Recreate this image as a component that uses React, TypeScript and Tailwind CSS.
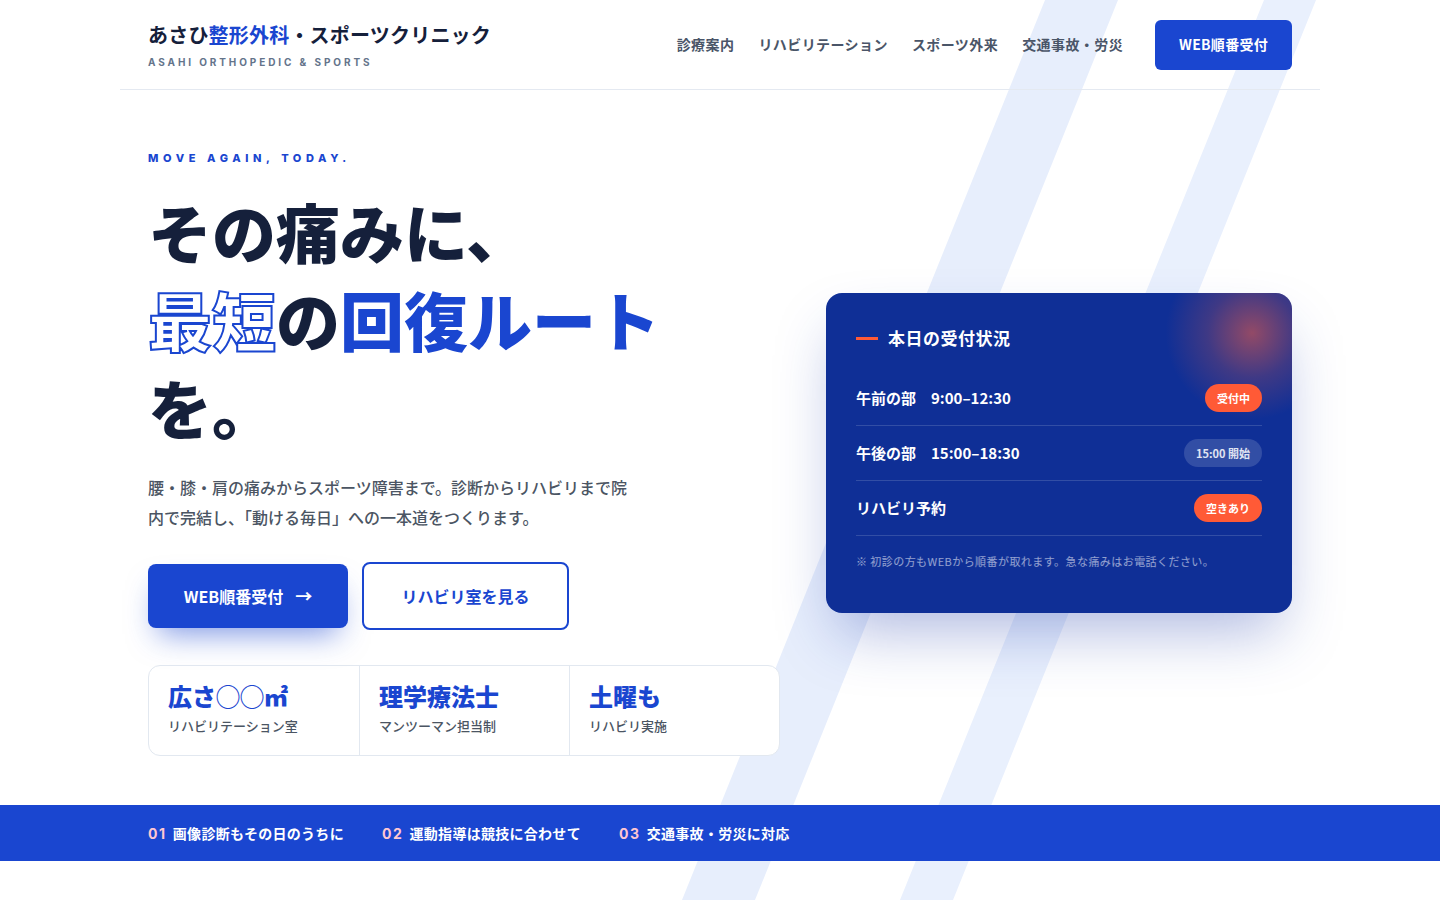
import React from "react";

type Slot = {
  label: string;
  badge: string;
  tone: "hot" | "muted";
};

const navItems = ["診療案内", "リハビリテーション", "スポーツ外来", "交通事故・労災"];

const slots: Slot[] = [
  { label: "午前の部　9:00–12:30", badge: "受付中", tone: "hot" },
  { label: "午後の部　15:00–18:30", badge: "15:00 開始", tone: "muted" },
  { label: "リハビリ予約", badge: "空きあり", tone: "hot" },
];

const stats = [
  { title: "広さ◯◯㎡", sub: "リハビリテーション室" },
  { title: "理学療法士", sub: "マンツーマン担当制" },
  { title: "土曜も", sub: "リハビリ実施" },
];

const points = [
  { no: "01", text: "画像診断もその日のうちに" },
  { no: "02", text: "運動指導は競技に合わせて" },
  { no: "03", text: "交通事故・労災に対応" },
];

const Stripes = (): JSX.Element => (
  <svg
    className="pointer-events-none absolute inset-0 h-full w-full"
    viewBox="0 0 1440 900"
    preserveAspectRatio="none"
    aria-hidden="true"
  >
    <polygon points="1045,0 1118,0 755,900 682,900" fill="#e7eefc" />
    <polygon points="1264,0 1316,0 953,900 900,900" fill="#e9f0fd" />
  </svg>
);

const Header = (): JSX.Element => (
  <header className="mx-auto max-w-[1200px]">
    <div className="flex h-[90px] items-center justify-between border-b border-[#e4e9f1] px-7">
      <div className="pt-[2px]">
        <p className="text-[20px] font-bold leading-6 tracking-[0.01em] text-[#15203b]">
          あさひ<span className="text-[#1a46d0]">整形外科</span>・スポーツクリニック
        </p>
        <p className="mt-[9px] font-['Inter','Noto_Sans_CJK_JP',sans-serif] text-[10px] font-bold leading-3 tracking-[0.29em] text-[#64748b]">
          ASAHI ORTHOPEDIC &amp; SPORTS
        </p>
      </div>
      <nav className="flex items-center gap-6">
        {navItems.map((item) => (
          <a key={item} className="text-[14px] font-bold tracking-[0.03em] text-[#4a5568]">
            {item}
          </a>
        ))}
        <a className="ml-2 flex h-[50px] items-center rounded-md bg-[#1a46d0] px-6 text-[14px] font-bold tracking-[0.02em] text-white">
          WEB順番受付
        </a>
      </nav>
    </div>
  </header>
);

const StatusCard = (): JSX.Element => (
  <div className="relative overflow-hidden rounded-2xl bg-[#0f2f96] px-[30px] pb-11 pt-8 shadow-[0_30px_60px_-12px_rgba(28,58,170,0.35)]">
    <div className="absolute -right-[50px] -top-[50px] h-[180px] w-[180px] rounded-full bg-[radial-gradient(circle,rgba(255,96,64,0.55)_0%,rgba(255,96,64,0.2)_35%,transparent_68%)]" />
    <div className="relative flex items-center gap-[10px]">
      <span className="h-[3px] w-[22px] bg-[#ff5a36]" />
      <h3 className="text-[17px] font-bold leading-[26px] tracking-[0.03em] text-white">本日の受付状況</h3>
    </div>
    <ul className="relative mt-5">
      {slots.map((slot) => (
        <li
          key={slot.label}
          className="flex h-[55px] items-center justify-between border-b border-white/15"
        >
          <span className="text-[15px] font-bold text-white">{slot.label}</span>
          <span
            className={
              slot.tone === "hot"
                ? "flex h-7 items-center rounded-full bg-[#ff5a36] px-3 text-[11px] font-bold text-white"
                : "flex h-7 items-center rounded-full bg-white/15 px-3 text-[11px] font-bold text-white/85"
            }
          >
            {slot.badge}
          </span>
        </li>
      ))}
    </ul>
    <p className="relative mt-[17px] text-[11px] leading-4 tracking-[0.04em] text-white/55">
      ※ 初診の方もWEBから順番が取れます。急な痛みはお電話ください。
    </p>
  </div>
);

const Hero = (): JSX.Element => (
  <section className="mx-auto max-w-[1200px] px-7 pb-[49px] pt-[60px]">
    <div className="grid grid-cols-[632px_466px] items-center justify-between">
      <div>
        <p className="font-['Inter','Noto_Sans_CJK_JP',sans-serif] text-[11px] font-extrabold leading-4 tracking-[0.42em] text-[#1a46d0]">
          MOVE AGAIN, TODAY.
        </p>
        <h1 className="mt-[20px] text-[64px] font-black leading-[88px] text-[#15203b]">
          その痛みに、
          <br />
          <span className="text-transparent [-webkit-text-stroke:2px_#1a46d0]">最短</span>
          の<span className="text-[#1a46d0]">回復ルート</span>
          <br />
          を。
        </h1>
        <p className="mt-[22px] w-[480px] text-[16px] font-medium leading-[30px] text-[#4b5563]">
          腰・膝・肩の痛みからスポーツ障害まで。診断からリハビリまで院内で完結し、「動ける毎日」への一本道をつくります。
        </p>
        <div className="mt-[30px] flex items-center gap-[14px]">
          <a className="flex h-16 w-[200px] items-center justify-center gap-3 rounded-lg bg-[#1a46d0] text-[16px] font-bold text-white shadow-[0_16px_30px_-10px_rgba(26,70,208,0.55)]">
            WEB順番受付 <span className="text-[17px]">→</span>
          </a>
          <a className="flex h-[68px] w-[207px] items-center justify-center rounded-lg border-2 border-[#1a46d0] bg-white text-[16px] font-bold text-[#1a46d0]">
            リハビリ室を見る
          </a>
        </div>
        <div className="mt-[35px] grid grid-cols-3 rounded-xl border border-[#e2e8f0] bg-white">
          {stats.map((s, i) => (
            <div
              key={s.title}
              className={
                i === 0
                  ? "px-[19px] pb-[19px] pt-[14px]"
                  : "border-l border-[#e2e8f0] px-[19px] pb-[19px] pt-[14px]"
              }
            >
              <p className="text-[24px] font-black leading-8 text-[#1a46d0]">{s.title}</p>
              <p className="mt-1 text-[13px] font-medium leading-5 text-[#4b5563]">{s.sub}</p>
            </div>
          ))}
        </div>
      </div>
      <StatusCard />
    </div>
  </section>
);

const PointBar = (): JSX.Element => (
  <div className="relative bg-[#1a46d0]">
    <div className="mx-auto flex h-14 max-w-[1200px] items-center gap-[38px] px-7">
      {points.map((p) => (
        <p key={p.no} className="text-[14px] font-bold tracking-[0.02em] text-white">
          <span className="mr-[6px] font-['Inter','Noto_Sans_CJK_JP',sans-serif] tracking-[0.12em] text-[#ffc7d2]">
            {p.no}
          </span>
          {p.text}
        </p>
      ))}
    </div>
  </div>
);

export default function App(): JSX.Element {
  return (
    <div className="relative min-h-screen overflow-hidden bg-white font-['Noto_Sans_CJK_JP',sans-serif]">
      <Stripes />
      <div className="relative">
        <Header />
        <Hero />
        <PointBar />
      </div>
    </div>
  );
}
